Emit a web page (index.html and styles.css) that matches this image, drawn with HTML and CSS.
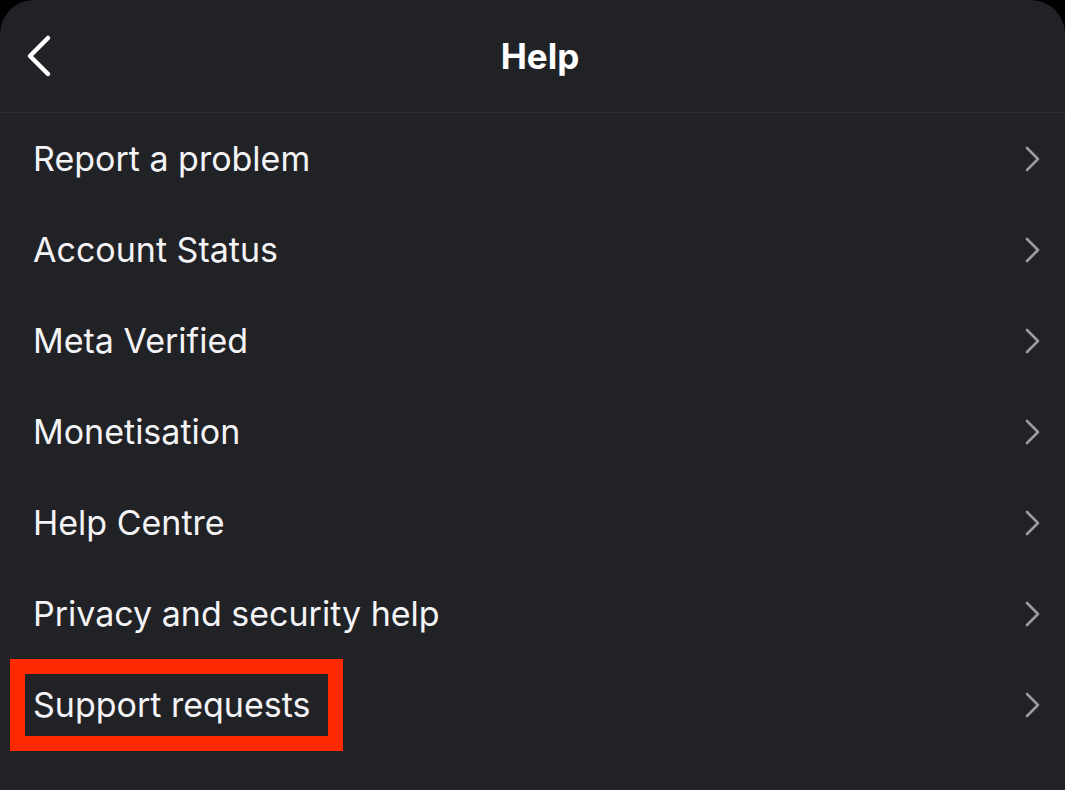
FILE: index.html
```html
<!DOCTYPE html>
<html>
<head>
<meta charset="utf-8">
<link rel="stylesheet" href="styles.css">
</head>
<body>
<div class="screen">
  <header class="header">
    <svg class="back" width="30" height="44" viewBox="0 0 30 44"><path d="M24 4 L6 22 L24 40" fill="none" stroke="#ffffff" stroke-width="4.5" stroke-linecap="round" stroke-linejoin="round"/></svg>
    <h1 class="title">Help</h1>
  </header>
  <ul class="list">
    <li class="row"><span class="label">Report a problem</span><svg class="chev" width="20" height="28" viewBox="0 0 20 28"><path d="M4 3 L15 14 L4 25" fill="none" stroke="#9b9ba0" stroke-width="2.6" stroke-linecap="round" stroke-linejoin="round"/></svg></li>
    <li class="row"><span class="label">Account Status</span><svg class="chev" width="20" height="28" viewBox="0 0 20 28"><path d="M4 3 L15 14 L4 25" fill="none" stroke="#9b9ba0" stroke-width="2.6" stroke-linecap="round" stroke-linejoin="round"/></svg></li>
    <li class="row"><span class="label">Meta Verified</span><svg class="chev" width="20" height="28" viewBox="0 0 20 28"><path d="M4 3 L15 14 L4 25" fill="none" stroke="#9b9ba0" stroke-width="2.6" stroke-linecap="round" stroke-linejoin="round"/></svg></li>
    <li class="row"><span class="label">Monetisation</span><svg class="chev" width="20" height="28" viewBox="0 0 20 28"><path d="M4 3 L15 14 L4 25" fill="none" stroke="#9b9ba0" stroke-width="2.6" stroke-linecap="round" stroke-linejoin="round"/></svg></li>
    <li class="row"><span class="label">Help Centre</span><svg class="chev" width="20" height="28" viewBox="0 0 20 28"><path d="M4 3 L15 14 L4 25" fill="none" stroke="#9b9ba0" stroke-width="2.6" stroke-linecap="round" stroke-linejoin="round"/></svg></li>
    <li class="row"><span class="label">Privacy and security help</span><svg class="chev" width="20" height="28" viewBox="0 0 20 28"><path d="M4 3 L15 14 L4 25" fill="none" stroke="#9b9ba0" stroke-width="2.6" stroke-linecap="round" stroke-linejoin="round"/></svg></li>
    <li class="row"><span class="label">Support requests</span><svg class="chev" width="20" height="28" viewBox="0 0 20 28"><path d="M4 3 L15 14 L4 25" fill="none" stroke="#9b9ba0" stroke-width="2.6" stroke-linecap="round" stroke-linejoin="round"/></svg><span class="redbox"></span></li>
  </ul>
</div>
</body>
</html>
```
FILE: styles.css
```css
html, body {
  margin: 0;
  padding: 0;
  background: #000;
  width: 1065px;
  height: 790px;
  overflow: hidden;
}
.screen {
  width: 1065px;
  height: 790px;
  background: #212226;
  border-radius: 34px 34px 0 0;
  font-family: Inter, "Liberation Sans", sans-serif;
  color: #f4f4f6;
}
.header {
  height: 112px;
  border-bottom: 1px solid #2f3034;
  display: flex;
  align-items: center;
  justify-content: center;
  padding-left: 15px;
  position: relative;
}
.back {
  position: absolute;
  left: 24px;
  top: 34px;
}
.title {
  margin: 0;
  font-size: 35px;
  font-weight: 700;
  letter-spacing: 0;
  color: #fff;
}
.list {
  list-style: none;
  margin: 0;
  padding: 0;
}
.row {
  height: 91px;
  display: flex;
  align-items: center;
  justify-content: space-between;
  padding: 0 22px 0 33px;
  position: relative;
}
.label {
  font-size: 34px;
  font-weight: 400;
  letter-spacing: 0;
}
.redbox {
  position: absolute;
  left: 10px;
  top: 0;
  width: 303px;
  height: 62px;
  border: 15px solid #ff2a00;
}
```
